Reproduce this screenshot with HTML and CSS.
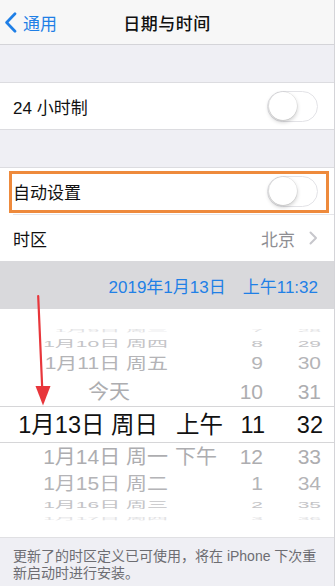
FILE: index.html
```html
<!DOCTYPE html>
<html lang="zh-CN">
<head>
<meta charset="utf-8">
<title>日期与时间</title>
<link rel="stylesheet" href="styles.css">
</head>
<body>
<div class="screen">
  <header class="nav">
    <div class="back">
      <svg class="back-icon" width="13" height="21" viewBox="0 0 13 21"><path d="M11 1.8 L2.6 10.5 L11 19.2" fill="none" stroke="#1f7fe6" stroke-width="2.7" stroke-linecap="round" stroke-linejoin="round"/></svg>
      <span>通用</span>
    </div>
    <div class="title">日期与时间</div>
    <div></div>
  </header>

  <div class="gap"></div>

  <section class="group">
    <div class="cell">
      <span>24 小时制</span>
      <span class="switch"><span class="knob"></span></span>
    </div>
  </section>

  <div class="gap"></div>

  <section class="group group-open">
    <div class="cell">
      <span>自动设置</span>
      <span class="switch"><span class="knob"></span></span>
    </div>
    <div class="sep"></div>
    <div class="cell">
      <span>时区</span>
      <span class="detail">北京<svg class="chev" width="9" height="14" viewBox="0 0 9 14"><path d="M1.5 1.5 L7 7 L1.5 12.5" fill="none" stroke="#c7c7cc" stroke-width="2" stroke-linecap="round" stroke-linejoin="round"/></svg></span>
    </div>
  </section>

  <div class="datebar">
    <span>2019年1月13日</span>
    <span>上午11:32</span>
  </div>

  <div class="picker">
    <div class="row r4"><span class="d">1月9日 周三</span><span class="a"></span><span class="h">7</span><span class="m">28</span></div>
    <div class="row r3 up3"><span class="d">1月10日 周四</span><span class="a"></span><span class="h">8</span><span class="m">29</span></div>
    <div class="row r2 up2"><span class="d">1月11日 周五</span><span class="a"></span><span class="h">9</span><span class="m">30</span></div>
    <div class="row r1 up1"><span class="d today">今天</span><span class="a"></span><span class="h">10</span><span class="m">31</span></div>
    <div class="row sel"><span class="d">1月13日 周日</span><span class="a">上午</span><span class="h">11</span><span class="m">32</span></div>
    <div class="row r1 dn1"><span class="d">1月14日 周一</span><span class="a">下午</span><span class="h">12</span><span class="m">33</span></div>
    <div class="row r2 dn2"><span class="d">1月15日 周二</span><span class="a"></span><span class="h">1</span><span class="m">34</span></div>
    <div class="row r3 dn3"><span class="d">1月16日 周三</span><span class="a"></span><span class="h">2</span><span class="m">35</span></div>
    <div class="row r4"><span class="d">1月17日 周四</span><span class="a"></span><span class="h">3</span><span class="m">36</span></div>
  </div>

  <footer class="note">更新了的时区定义已可使用，将在 iPhone 下次重新启动时进行安装。</footer>

  <div class="highlight"></div>
  <svg class="arrow" width="60" height="122" viewBox="0 0 60 122">
    <path d="M38.2 6 L42.2 98" stroke="#e8363b" stroke-width="2.2" stroke-linecap="round"/>
    <path d="M35.5 96 L50.5 96 L43 115.5 Z" fill="#e8363b"/>
  </svg>
</div>
</body>
</html>
```
FILE: styles.css
```css
html, body {
  margin: 0;
  padding: 0;
  background: #efeff4;
}

.screen {
  position: relative;
  width: 334px;
  height: 586px;
  border-right: 1px solid #d4d4d8;
  overflow: hidden;
  background: #efeff4;
  font-family: "Liberation Sans", "Noto Sans CJK SC", sans-serif;
  color: #111;
  display: flex;
  flex-direction: column;
}

/* nav */
.nav {
  height: 44px;
  flex: none;
  background: #f7f7f7;
  border-bottom: 1px solid #d4d4d8;
  display: grid;
  grid-template-columns: 1fr auto 1fr;
  align-items: center;
}

.back {
  display: flex;
  align-items: center;
  gap: 6px;
  padding-left: 4px;
  color: #1f7fe6;
  font-size: 17px;
}

.back-icon {
  display: block;
  margin-top: 1px;
}

.title {
  font-size: 17px;
  font-weight: 500;
  color: #111;
  letter-spacing: 0.5px;
}

.gap {
  height: 37px;
  flex: none;
}

/* groups */
.group {
  flex: none;
  background: #fff;
  border-top: 1px solid #dcdce0;
  border-bottom: 1px solid #dcdce0;
}

.group-open {
  border-bottom: none;
}

.cell {
  height: 46px;
  display: flex;
  align-items: center;
  justify-content: space-between;
  padding: 0 16px 0 13px;
  font-size: 17px;
  color: #111;
}

.sep {
  height: 1px;
  margin-left: 13px;
  background: #e6e6ea;
}

.switch {
  width: 51px;
  height: 31px;
  box-sizing: border-box;
  border-radius: 16px;
  border: 1.5px solid #e3e3e7;
  background: #fff;
  display: flex;
  align-items: center;
  padding-left: 0.5px;
}

.knob {
  width: 28px;
  height: 28px;
  border-radius: 50%;
  background: #fff;
  box-shadow: 0 2px 4px rgba(0, 0, 0, 0.22), 0 0 0 0.5px rgba(0, 0, 0, 0.1);
}

.detail {
  display: flex;
  align-items: center;
  gap: 14px;
  color: #8e8e93;
}

.chev {
  display: block;
}

/* date bar */
.datebar {
  height: 48px;
  flex: none;
  background: #d9d9dc;
  display: flex;
  justify-content: flex-end;
  align-items: center;
  gap: 17px;
  padding-right: 16px;
  color: #1f80e6;
  font-size: 17px;
}

/* picker */
.picker {
  height: 228px;
  flex: none;
  box-sizing: border-box;
  padding: 16px 0 15px;
  background: #fff;
  display: flex;
  flex-direction: column;
}

.row {
  display: grid;
  grid-template-columns: 168px 57px 38px 58px;
  align-items: center;
  font-size: 21px;
  line-height: 21px;
  white-space: nowrap;
  color: #adadb0;
  flex: none;
}

.row span {
  display: block;
}

.row .d { text-align: right; }
.row .a { text-align: left; padding-left: 7px; }
.row .h { text-align: right; }
.row .m { text-align: right; }

.row .today { padding-right: 38px; }

.sel {
  height: 37px;
  box-sizing: border-box;
  border-top: 1px solid #d6d6d8;
  border-bottom: 1px solid #d6d6d8;
  grid-template-columns: 158px 67px 40px 58px;
  font-size: 23.5px;
  line-height: 24px;
  color: #111;
}

.sel .a { padding-left: 18px; }

.r4 {
  height: 9px;
  color: #e2e2e4;
  transform: scaleY(0.18);
}

.r3 {
  color: #c4c4c7;
}

.up3 { height: 16px; transform: scaleY(0.46); }
.dn3 { height: 17px; transform: scaleY(0.42); }

.r2 {
  color: #b4b4b7;
}

.up2 { height: 26px; transform: scaleY(0.75); }
.dn2 { height: 26px; transform: scaleY(0.86); }

.up1 { height: 30px; transform: scaleY(0.96); }
.dn1 { height: 27px; transform: scaleY(0.95); }

/* footer */
.note {
  flex: 1;
  border-top: 1px solid #e0e0e3;
  padding: 10px 15px 0 13px;
  font-size: 14px;
  line-height: 17px;
  color: #6d6d72;
  background: #efeff4;
}

/* annotations */
.highlight {
  position: absolute;
  left: 9px;
  top: 171px;
  width: 320px;
  height: 42px;
  box-sizing: border-box;
  border: 3px solid #ee8a3c;
}

.arrow {
  position: absolute;
  left: 0;
  top: 290px;
}
```
